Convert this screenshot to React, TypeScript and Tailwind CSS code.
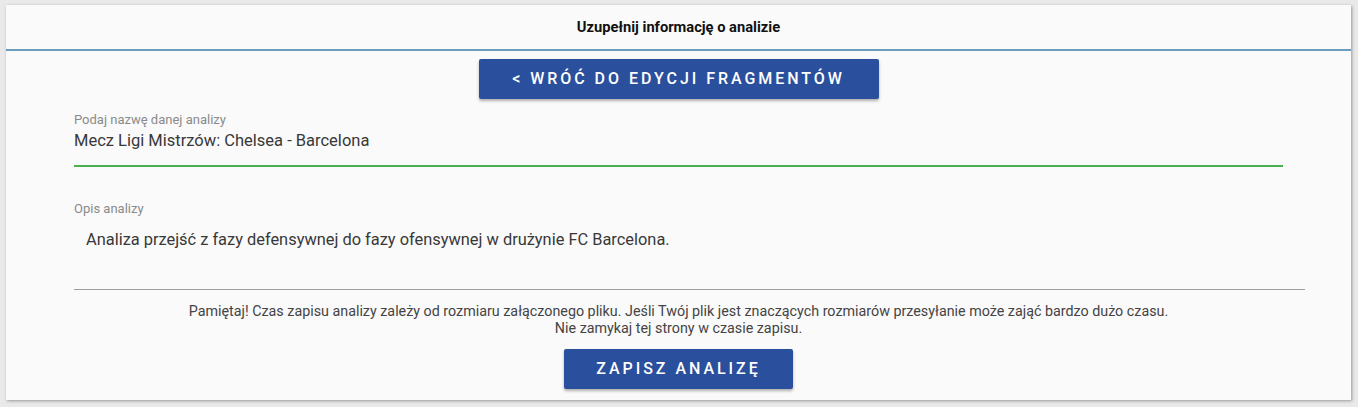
import React from "react";

export default function App() {
  return (
    <div className="min-h-[407px] w-full bg-[#e9e9e9] px-[6px] pt-[5px] font-['Roboto',sans-serif]">
      <div className="w-[1345px] h-[395px] bg-[#fafafa] shadow-[1px_1px_3px_rgba(0,0,0,0.35)] flex flex-col">
        {/* Header */}
        <div className="h-[46px] flex items-center justify-center border-b-2 border-[#6b9cbe]">
          <h2 className="text-[14.7px] font-bold text-[#111] leading-none pt-[1px]">
            Uzupełnij informację o analizie
          </h2>
        </div>

        <div className="flex justify-center mt-[8px]">
          <button className="w-[400px] h-[40px] bg-[#2a509d] text-white text-[16px] font-medium tracking-[0.185em] rounded-[2px] shadow-[0_2px_3px_rgba(0,0,0,0.3)]">
            &lt; WRÓĆ DO EDYCJI FRAGMENTÓW
          </button>
        </div>

        {/* Name field */}
        <div className="ml-[68px] w-[1209px] mt-[13px]">
          <div className="text-[13px] leading-[16px] text-[#8a8a8a]">Podaj nazwę danej analizy</div>
          <div className="text-[16.5px] leading-[24px] text-[#383838] mt-[1px] pb-[12px] border-b-2 border-[#4caf50]">
            Mecz Ligi Mistrzów: Chelsea - Barcelona
          </div>
        </div>

        {/* Description field */}
        <div className="ml-[68px] w-[1231px] mt-[34px]">
          <div className="text-[13px] leading-[16px] text-[#8a8a8a]">Opis analizy</div>
          <div className="h-[73px] border-b border-[#9e9e9e] pt-[11px]">
            <p className="ml-[12px] text-[16.4px] leading-[24px] text-[#383838]">
              Analiza przejść z fazy defensywnej do fazy ofensywnej w drużynie FC Barcelona.
            </p>
          </div>
        </div>

        {/* Notice */}
        <div className="text-center text-[14.3px] leading-[17px] text-[#444] mt-[13px]">
          <p>Pamiętaj! Czas zapisu analizy zależy od rozmiaru załączonego pliku. Jeśli Twój plik jest znaczących rozmiarów przesyłanie może zająć bardzo dużo czasu.</p>
          <p>Nie zamykaj tej strony w czasie zapisu.</p>
        </div>

        <div className="flex justify-center mt-[12px]">
          <button className="w-[229px] h-[40px] bg-[#2a509d] text-white text-[16px] font-medium tracking-[0.185em] rounded-[2px] shadow-[0_2px_3px_rgba(0,0,0,0.3)]">
            ZAPISZ ANALIZĘ
          </button>
        </div>
      </div>
    </div>
  );
}
